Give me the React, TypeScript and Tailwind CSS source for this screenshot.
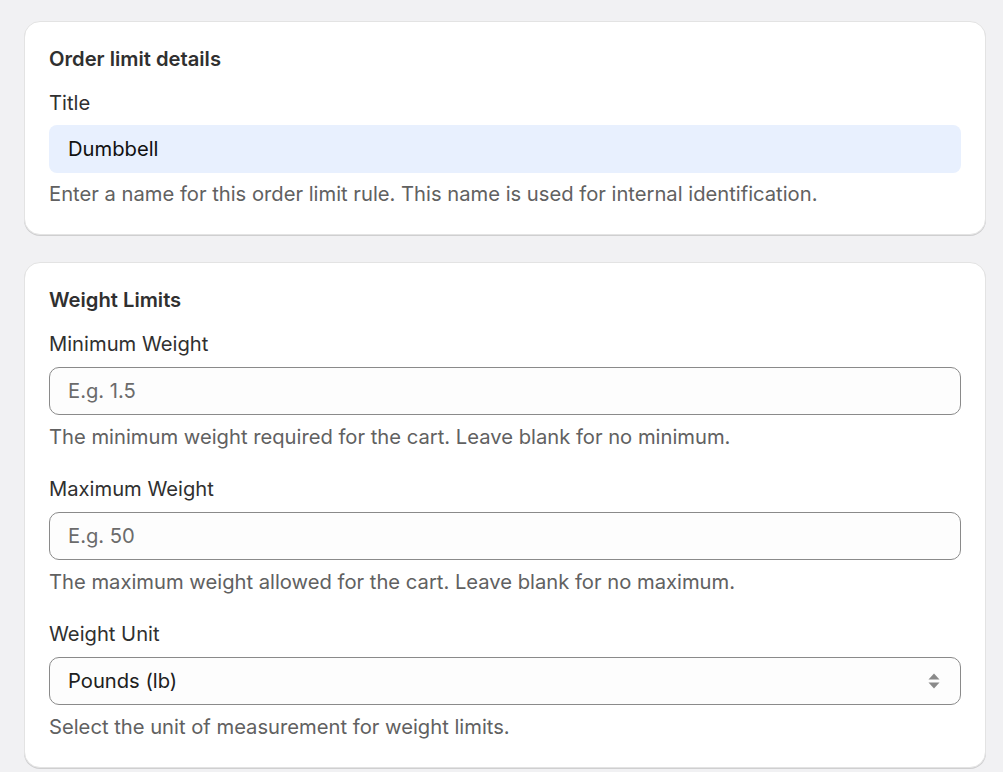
import React from "react";

function Field({
  label,
  placeholder,
  help,
}: {
  label: string;
  placeholder: string;
  help: string;
}) {
  return (
    <div className="flex flex-col">
      <label className="text-[#303030] leading-6 mb-[11px]">{label}</label>
      <div className="h-12 rounded-[10px] border border-[#8a8a8a] bg-[#fdfdfd] flex items-center px-[18px] text-[#6b6b6b]">
        {placeholder}
      </div>
      <p className="text-[#616161] leading-6 mt-2.5">{help}</p>
    </div>
  );
}

function App() {
  return (
    <div
      className="min-h-[772px] bg-[#f1f1f3] pt-[21px] pl-6 pr-[17px] text-[20.2px]"
      style={{ fontFamily: "Inter, 'Noto Sans', sans-serif" }}
    >
      <div className="bg-white rounded-2xl border border-[#e3e3e3] shadow-[0_1px_0_0_rgba(0,0,0,0.14)] pt-[25px] px-6 pb-7">
        <h2 className="font-semibold text-[#303030] leading-6 mb-5">Order limit details</h2>
        <label className="block text-[#303030] leading-6 mb-2.5">Title</label>
        <div className="h-12 rounded-lg bg-[#e8f0fe] flex items-center px-[19px] text-[#111]">
          Dumbbell
        </div>
        <p className="text-[#616161] leading-6 mt-[9px]">
          Enter a name for this order limit rule. This name is used for internal identification.
        </p>
      </div>

      <div className="mt-[27px] bg-white rounded-2xl border border-[#e3e3e3] shadow-[0_1px_0_0_rgba(0,0,0,0.14)] pt-[25px] px-6 pb-7">
        <h2 className="font-semibold text-[#303030] leading-6 mb-5">Weight Limits</h2>
        <div className="flex flex-col gap-7">
          <Field
            label="Minimum Weight"
            placeholder="E.g. 1.5"
            help="The minimum weight required for the cart. Leave blank for no minimum."
          />
          <Field
            label="Maximum Weight"
            placeholder="E.g. 50"
            help="The maximum weight allowed for the cart. Leave blank for no maximum."
          />
          <div className="flex flex-col">
            <label className="text-[#303030] leading-6 mb-[11px]">Weight Unit</label>
            <div className="h-12 rounded-[10px] border border-[#8a8a8a] bg-[#fdfdfd] flex items-center justify-between pl-[18px] pr-[20px] text-[#202020]">
              <span>Pounds (lb)</span>
              <svg width="12" height="20" viewBox="0 0 12 20" className="text-[#8a8a8a]">
                <path d="M6 2.5 L11.5 8.5 H0.5 Z" fill="currentColor" />
                <path d="M6 17.5 L11.5 11.5 H0.5 Z" fill="currentColor" />
              </svg>
            </div>
            <p className="text-[#616161] leading-6 mt-2.5">
              Select the unit of measurement for weight limits.
            </p>
          </div>
        </div>
      </div>
    </div>
  );
}

export default App;
